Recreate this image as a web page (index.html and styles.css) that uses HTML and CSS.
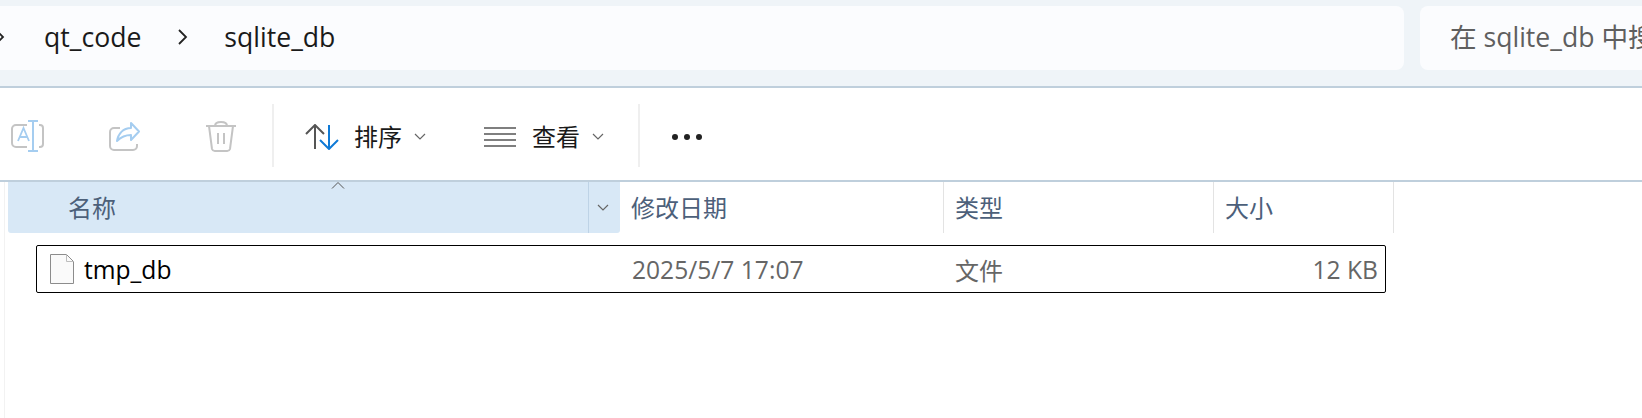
FILE: index.html
```html
<!DOCTYPE html>
<html lang="en">
<head>
    <meta charset="UTF-8">
    <meta name="viewport" content="width=device-width, initial-scale=1.0">
    <title>sqlite_db</title>
    <link rel="stylesheet" href="styles.css">
</head>
<body>
    <div class="topbar">
        <div class="address">
            <svg class="crumb-arrow first" width="10" height="16" viewBox="0 0 10 16"><path d="M1 1l7 7-7 7"/></svg>
            <span class="crumb">qt_code</span>
            <svg class="crumb-arrow" width="10" height="16" viewBox="0 0 10 16"><path d="M1 1l7 7-7 7"/></svg>
            <span class="crumb">sqlite_db</span>
        </div>
        <div class="search">在 sqlite_db 中搜索</div>
    </div>

    <div class="toolbar">
        <div class="tool-group">
            <svg class="tool-icon" width="34" height="34" viewBox="0 0 34 34" fill="none">
                <path d="M17 5H6a4 4 0 0 0-4 4v14a4 4 0 0 0 4 4h11M29 5h1a3 3 0 0 1 3 3v16a3 3 0 0 1-3 3h-1" stroke="#c4c4c4" stroke-width="2"/>
                <path d="M18 1h10M18 31h10M23 1v30" stroke="#a5cdf0" stroke-width="2"/>
                <path d="M8 21L13.500 8 19 21M10 17h7" stroke="#a5cdf0" stroke-width="1.800"/>
            </svg>
            <svg class="tool-icon" width="34" height="34" viewBox="0 0 34 34" fill="none">
                <path d="M13 8H7a4 4 0 0 0-4 4v14a4 4 0 0 0 4 4h19a4 4 0 0 0 4-4v-2" stroke="#c4c4c4" stroke-width="2"/>
                <path d="M24 3l8 8.500-8 8.500v-5c-6 0-10 2-14 6 1-7 6-13 14-13z" stroke="#a5cdf0" stroke-width="2" stroke-linejoin="round"/>
            </svg>
            <svg class="tool-icon" width="34" height="34" viewBox="0 0 34 34" fill="none">
                <path d="M2 6h30M11 6c0-3 2-4 6-4s6 1 6 4M5 6l3 23a3 3 0 0 0 3 2h12a3 3 0 0 0 3-2l3-23M14 13v11M20 13v11" stroke="#c4c4c4" stroke-width="2"/>
            </svg>
        </div>
        <div class="tool-sep"></div>
        <div class="tool-btn sort-btn">
            <svg width="34" height="26" viewBox="0 0 34 26" fill="none">
                <path d="M1 10L10 1l9 9M10 1v24" stroke="#555" stroke-width="2"/>
                <path d="M15 16l9 9 9-9M24 25V1" stroke="#0f7ad6" stroke-width="2"/>
            </svg>
            <span class="tool-label">排序</span>
            <svg class="chev" width="12" height="7" viewBox="0 0 12 7"><path d="M1 1l5 5 5-5"/></svg>
        </div>
        <div class="tool-btn view-btn">
            <svg width="34" height="22" viewBox="0 0 34 22" fill="none">
                <path d="M1 2h32M1 8h32M1 14h32M1 20h32" stroke="#555" stroke-width="1.500"/>
            </svg>
            <span class="tool-label">查看</span>
            <svg class="chev" width="12" height="7" viewBox="0 0 12 7"><path d="M1 1l5 5 5-5"/></svg>
        </div>
        <div class="tool-sep"></div>
        <div class="more"><i></i><i></i><i></i></div>
    </div>

    <div class="list">
        <div class="list-head">
            <div class="col col-name">
                <span>名称</span>
                <svg class="sort-caret" width="14" height="7" viewBox="0 0 14 7"><path d="M1 6.500l6-6 6 6"/></svg>
                <div class="name-drop">
                    <svg class="chev" width="12" height="7" viewBox="0 0 12 7"><path d="M1 1l5 5 5-5"/></svg>
                </div>
            </div>
            <div class="col col-date">修改日期</div>
            <div class="col col-type">类型</div>
            <div class="col col-size">大小</div>
        </div>
        <div class="file-row">
            <div class="cell-name">
                <svg width="24" height="30" viewBox="0 0 24 30">
                    <path d="M.5.500h16l7 7v22H.5z" fill="#fafafa" stroke="#8c8c8c"/>
                    <path d="M16.500.500v7h7" fill="none" stroke="#bdbdbd"/>
                </svg>
                <span>tmp_db</span>
            </div>
            <div class="cell-date">2025/5/7 17:07</div>
            <div class="cell-type">文件</div>
            <div class="cell-size">12 KB</div>
        </div>
    </div>
</body>
</html>
```

FILE: styles.css
```css
html, body {
    margin: 0;
    height: 100%;
    overflow: hidden;
}
body {
    font-family: "Open Sans", "Noto Sans CJK SC", sans-serif;
    background: #ffffff;
    color: #1a1a1a;
}

/* address + search */
.topbar {
    display: flex;
    gap: 16px;
    box-sizing: border-box;
    height: 88px;
    padding: 6px 0 16px;
    background: #eff4f8;
    border-bottom: 2px solid #bfcfdc;
}
.address {
    width: 1404px;
    flex: none;
    display: flex;
    align-items: center;
    background: #fbfcfe;
    border-radius: 0 8px 8px 0;
    font-size: 26.600px;
    padding-bottom: 2px;
    box-sizing: border-box;
}
.crumb-arrow {
    flex: none;
    fill: none;
    stroke: #222;
    stroke-width: 1.800;
    margin: 0 36px 0 37px;
}
.crumb-arrow.first {
    margin: 0 39px 0 -5px;
}
.search {
    flex: 1;
    overflow: hidden;
    white-space: nowrap;
    background: #fbfcfe;
    border-radius: 8px 0 0 8px;
    font-size: 26.600px;
    line-height: 62px;
    padding-left: 30px;
    color: #5f5f5f;
}

/* toolbar */
.toolbar {
    display: flex;
    align-items: center;
    box-sizing: border-box;
    height: 94px;
    padding-top: 2px;
    border-bottom: 2px solid #bfcfdc;
}
.tool-group {
    display: flex;
    align-items: center;
    gap: 63px;
    margin: 3px 0 0 10px;
    width: 262px;
}
.tool-sep {
    width: 2px;
    height: 63px;
    background: #efefef;
    flex: none;
}
.tool-btn {
    display: flex;
    align-items: center;
    font-size: 24px;
    margin-top: 3px;
}
.tool-label {
    margin-left: 15px;
    line-height: 1;
}
.sort-btn {
    margin-left: 31px;
    width: 178px;
}
.view-btn {
    width: 155px;
}
.chev {
    fill: none;
    stroke: #666;
    stroke-width: 1.200;
    margin-left: 12px;
}
.more {
    display: flex;
    gap: 6px;
    margin: 3px 0 0 32px;
}
.more i {
    width: 6px;
    height: 6px;
    border-radius: 50%;
    background: #222;
}

/* file list */
.list {
    margin-left: 4px;
    min-height: 240px;
    border-left: 1px solid #f2f2f2;
    padding-left: 3px;
}
.list-head {
    display: flex;
    height: 51px;
    font-size: 24px;
    color: #4c607a;
}
.col {
    display: flex;
    align-items: center;
    box-sizing: border-box;
    padding-left: 11px;
    border-right: 1px solid #e3e3e3;
    padding-bottom: 2px;
}
.col-name {
    position: relative;
    width: 612px;
    padding-left: 60px;
    background: #d8e8f6;
    border: none;
    border-radius: 0 0 3px 3px;
}
.sort-caret {
    position: absolute;
    left: 323px;
    top: 0;
    fill: none;
    stroke: #555;
    stroke-width: 1;
}
.name-drop {
    position: absolute;
    right: 0;
    top: 0;
    bottom: 0;
    width: 31px;
    display: flex;
    align-items: center;
    border-left: 1px solid #bed3e6;
}
.name-drop .chev {
    margin-left: 8px;
}
.col-date { width: 324px; }
.col-type { width: 270px; }
.col-size { width: 180px; }

.file-row {
    display: flex;
    align-items: center;
    box-sizing: border-box;
    width: 1350px;
    height: 48px;
    margin: 12px 0 0 28px;
    border: 1.500px solid #000;
    border-radius: 2px;
    font-size: 24.600px;
    color: #666;
}
.cell-name {
    display: flex;
    align-items: center;
    gap: 10px;
    width: 595px;
    padding-left: 13px;
    box-sizing: border-box;
    color: #000;
}
.cell-date { width: 323px; }
.cell-type { width: 270px; font-size: 24px; }
.cell-size {
    flex: 1;
    text-align: right;
    padding-right: 7px;
}
```
